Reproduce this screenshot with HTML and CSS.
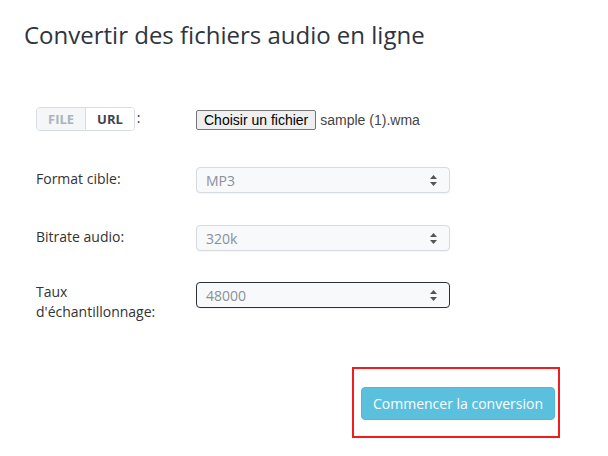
FILE: index.html
```html
<!DOCTYPE html>
<html lang="fr">
<head>
<meta charset="utf-8">
<title>Convertir des fichiers audio en ligne</title>
<link rel="stylesheet" href="styles.css">
</head>
<body>
<div class="page">
  <h1 class="title">Convertir des fichiers audio en ligne</h1>
  <form class="form">
    <div class="row row-file">
      <div class="label">
        <span class="toggle"><span class="seg seg-off">FILE</span><span class="seg seg-on">URL</span></span><span class="colon">:</span>
      </div>
      <div class="control file-control">
        <span class="file-btn">Choisir un fichier</span><span class="file-name">sample (1).wma</span>
      </div>
    </div>
    <div class="row row-format">
      <div class="label">Format cible:</div>
      <div class="control"><div class="select"><span>MP3</span><svg class="arrows" width="7" height="11" viewBox="0 0 7 11"><path d="M3.5 0 L7 4 L0 4 Z M0 7 L7 7 L3.5 11 Z" fill="#555"/></svg></div></div>
    </div>
    <div class="row row-bitrate">
      <div class="label">Bitrate audio:</div>
      <div class="control"><div class="select"><span>320k</span><svg class="arrows" width="7" height="11" viewBox="0 0 7 11"><path d="M3.5 0 L7 4 L0 4 Z M0 7 L7 7 L3.5 11 Z" fill="#555"/></svg></div></div>
    </div>
    <div class="row row-rate">
      <div class="label">Taux<br>d'échantillonnage:</div>
      <div class="control"><div class="select select-focus"><span>48000</span><svg class="arrows" width="7" height="11" viewBox="0 0 7 11"><path d="M3.5 0 L7 4 L0 4 Z M0 7 L7 7 L3.5 11 Z" fill="#555"/></svg></div></div>
    </div>
    <div class="actions">
      <div class="highlight"><span class="btn">Commencer la conversion</span></div>
    </div>
  </form>
</div>
</body>
</html>
```

FILE: styles.css
```css
html, body {
  margin: 0;
  padding: 0;
  background: #fff;
}
body {
  font-family: "Open Sans", "DejaVu Sans", sans-serif;
  color: #333;
}
.page {
  padding: 18px 0 0 24px;
}
.title {
  margin: 0;
  font-size: 24px;
  line-height: 33px;
  font-weight: 400;
  color: #2d3540;
}
.form {
  margin-top: 56px;
  padding-left: 12px;
}
.row {
  display: flex;
  align-items: flex-start;
}
.label {
  width: 160px;
  font-size: 14px;
  line-height: 20px;
  color: #333;
  flex: none;
}
.control {
  width: 254px;
}
.row-file { height: 24px; }
.row-format { margin-top: 36px; }
.row-bitrate { margin-top: 32px; }
.row-rate { margin-top: 31px; }
.row-format .label, .row-bitrate .label { padding-top: 2px; }

.toggle {
  display: inline-flex;
  border: 1px solid #d8dde3;
  border-radius: 4px;
  overflow: hidden;
  vertical-align: top;
}
.seg {
  display: block;
  font-size: 13px;
  font-weight: 700;
  line-height: 22px;
  padding: 0 11px;
}
.seg-off {
  background: #f4f6f8;
  color: #a9b3bf;
  border-right: 1px solid #d8dde3;
}
.seg-on {
  background: #fff;
  color: #3a4553;
}
.colon {
  display: inline-block;
  margin-left: 2px;
  line-height: 22px;
  font-size: 14px;
}
.file-control {
  display: flex;
  align-items: center;
  padding-top: 3px;
  font-family: "Liberation Sans", Arial, sans-serif;
  font-size: 14px;
}
.file-btn {
  display: inline-block;
  border: 1px solid #767676;
  border-radius: 2px;
  background: #efefef;
  color: #000;
  padding: 0 7px;
  line-height: 18px;
  font-size: 14px;
}
.file-name {
  margin-left: 4px;
  color: #444;
}
.select {
  box-sizing: border-box;
  height: 26px;
  border: 1px solid #d5dbe1;
  border-radius: 4px;
  background: #f7f9fa;
  display: flex;
  align-items: center;
  justify-content: space-between;
  padding: 0 12px 0 9px;
  font-size: 14px;
  color: #8a9099;
  box-shadow: 0 1px 1px rgba(0,0,0,0.04);
}
.select-focus {
  border-color: #2b2f36;
}
.arrows { display: block; }
.actions {
  display: flex;
  justify-content: flex-end;
  margin-top: 45px;
  padding-right: 48px;
}
.highlight {
  border: 2px solid #f21c1c;
  padding: 18px 3px 16px 7px;
}
.btn {
  display: block;
  width: 194px;
  box-sizing: border-box;
  height: 33px;
  line-height: 31px;
  text-align: center;
  background: #5bc0de;
  color: #fff;
  border-radius: 4px;
  font-size: 14px;
  border: 1px solid #52b8d7;
}
```
